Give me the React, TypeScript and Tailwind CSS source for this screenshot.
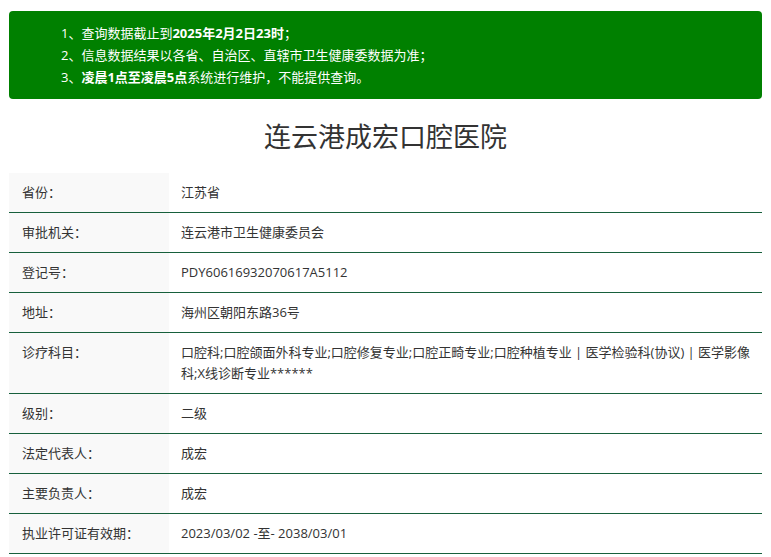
const rows: [string, string][] = [
  ['省份：', '江苏省'],
  ['审批机关：', '连云港市卫生健康委员会'],
  ['登记号：', 'PDY60616932070617A5112'],
  ['地址：', '海州区朝阳东路36号'],
  ['诊疗科目：', '口腔科;口腔颌面外科专业;口腔修复专业;口腔正畸专业;口腔种植专业 | 医学检验科(协议) | 医学影像科;X线诊断专业******'],
  ['级别：', '二级'],
  ['法定代表人：', '成宏'],
  ['主要负责人：', '成宏'],
  ['执业许可证有效期：', '2023/03/02 -至- 2038/03/01'],
]

export default function App() {
  return (
    <div className="w-[771px] bg-white px-[9px] pt-[11px] text-[#333]" style={{ fontFamily: '"Open Sans", "Noto Sans CJK SC", sans-serif' }}>
      <div className="rounded bg-[#008000] py-[11px] pl-[52px] text-[13px] leading-[22px] text-white">
        <div>1、查询数据截止到<b>2025年2月2日23时</b>；</div>
        <div>2、信息数据结果以各省、自治区、直辖市卫生健康委数据为准；</div>
        <div>3、<b>凌晨1点至凌晨5点</b>系统进行维护，不能提供查询。</div>
      </div>
      <h1 className="pt-[22px] pb-[20px] text-center text-[27px] leading-[32px] text-[#333]">连云港成宏口腔医院</h1>
      <div>
        {rows.map(([k, v]) => (
          <div key={k} className="flex border-b border-[#17603c] text-[13px] leading-[21px]">
            <div className="w-[160px] shrink-0 bg-[#f9f9f9] py-[9px] pl-[13px]">{k}</div>
            <div className="flex-1 py-[9px] pl-3 pr-2">{v}</div>
          </div>
        ))}
      </div>
    </div>
  )
}
